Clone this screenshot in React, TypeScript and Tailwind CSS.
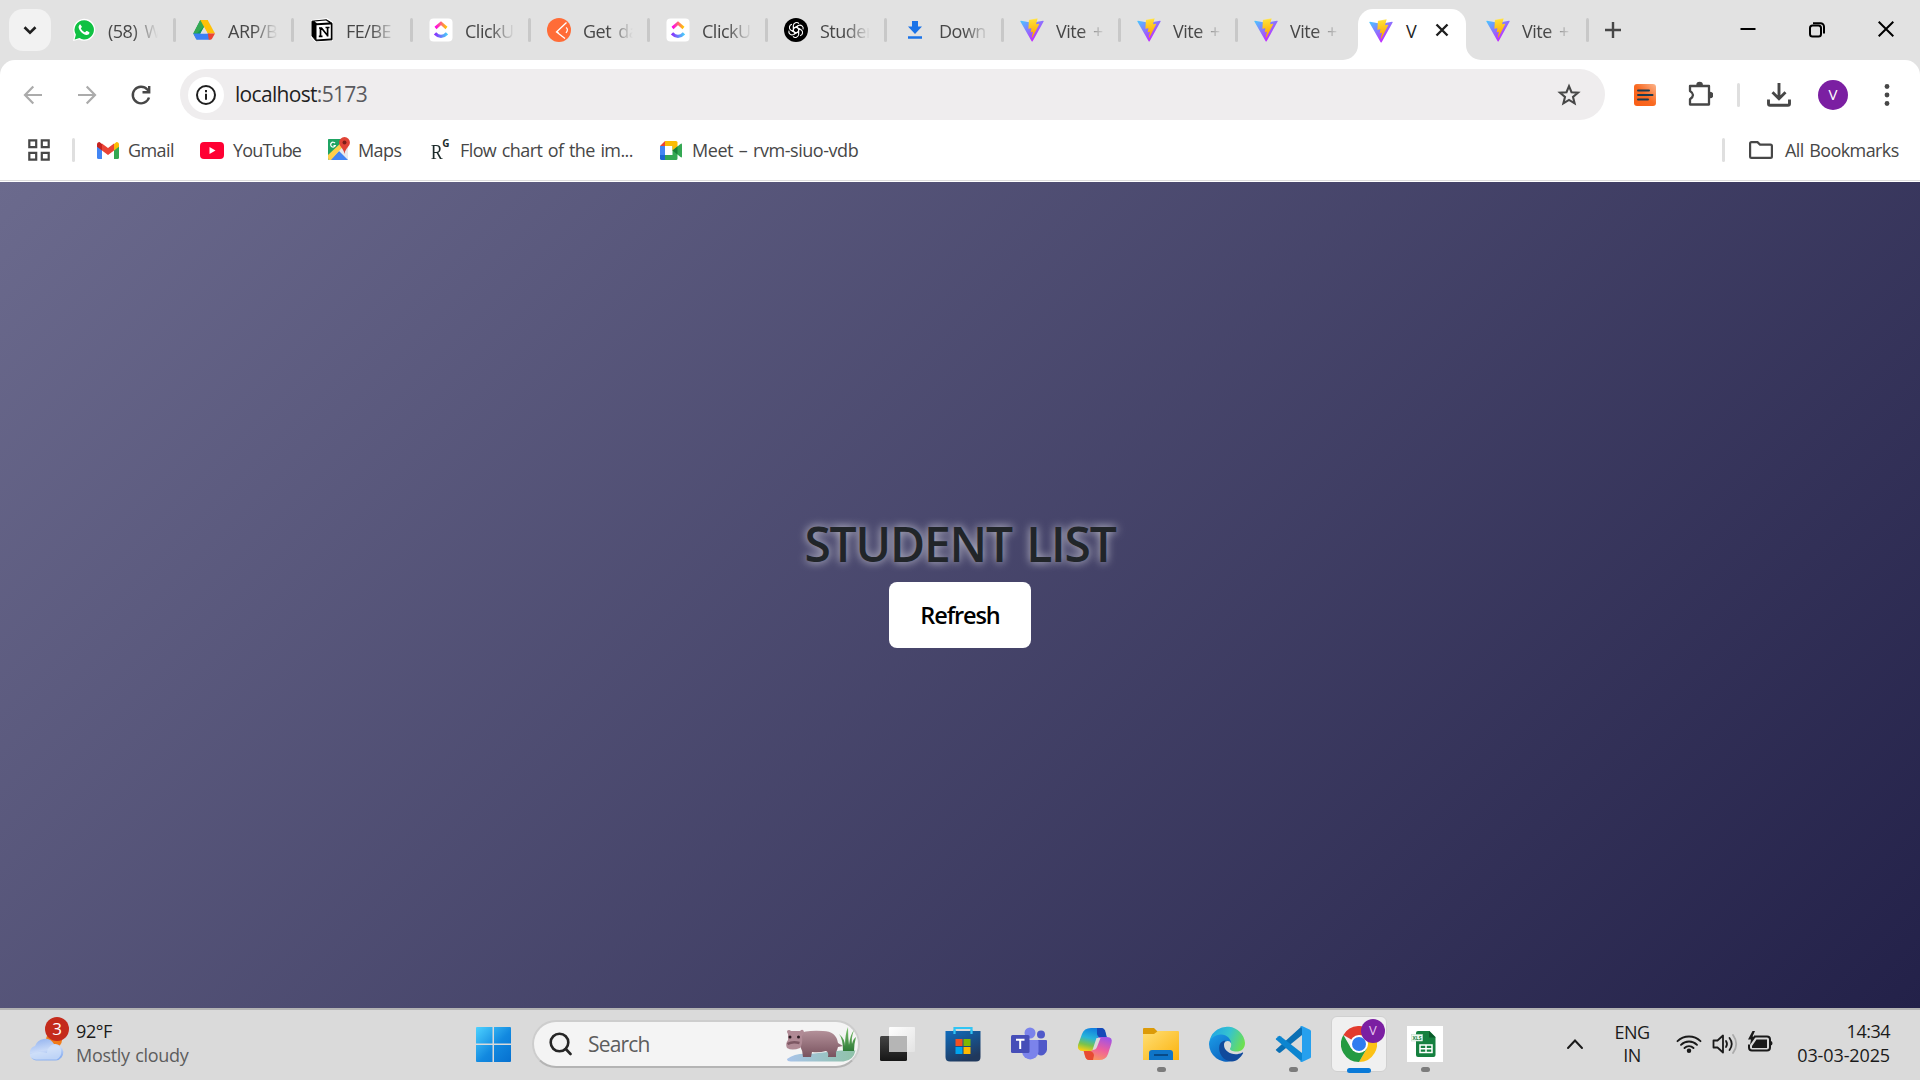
import React from 'react';

type KP = { children: React.ReactNode };

function Vite({ id }: { id: string }) {
  return (
    <svg className="h-6 w-6 shrink-0" viewBox="0 0 32 32" fill="none">
      <defs>
        <linearGradient id={id + 'a'} x1="0" y1="2" x2="18" y2="28" gradientUnits="userSpaceOnUse">
          <stop stopColor="#41d1ff" />
          <stop offset="1" stopColor="#bd34fe" />
        </linearGradient>
        <linearGradient id={id + 'b'} x1="15" y1="1" x2="18" y2="23" gradientUnits="userSpaceOnUse">
          <stop stopColor="#ffea83" />
          <stop offset="0.1" stopColor="#ffdd35" />
          <stop offset="1" stopColor="#ffa800" />
        </linearGradient>
      </defs>
      <path d="M31.5 4.8 16.9 31a.8.8 0 0 1-1.4 0L.5 4.8a.8.8 0 0 1 .8-1.2L16 6.2h.3l14.4-2.6a.8.8 0 0 1 .8 1.2Z" fill={`url(#${id}a)`} />
      <path d="M23 .2 12.200 2.300a.4.4 0 0 0-.3.4l-.7 11.200c0 .3.2.5.5.4l3-.7c.3 0 .5.2.5.5l-.9 4.400c-.1.3.2.5.5.4l1.900-.6c.3-.1.6.2.5.5l-1.400 6.900c-.1.4.5.7.7.3l.2-.2 8.900-17.600c.1-.3-.1-.6-.5-.5l-3.100.6c-.3 0-.5-.2-.5-.5l2-7c.1-.3-.1-.6-.500-.3Z" fill={`url(#${id}b)`} />
    </svg>
  );
}

function WhatsApp() {
  return (
    <svg className="h-6 w-6" viewBox="0 0 24 24">
      <path d="M1 23l1.500-6A11 11 0 1 1 7 21.500Z" fill="#fff" />
      <path d="M12.200 2.200a9.600 9.600 0 0 0-8.300 14.500L2.600 21.400l4.900-1.300a9.600 9.600 0 1 0 4.700-17.900Z" fill="#10c143" />
      <path d="M8.700 7c-.3-.6-.9-.6-1.300-.1-1.400 1.500-.8 3.600.5 5.500 1.700 2.500 4 4.200 6.300 4.500 1.700.2 3-.8 3.200-2 .1-.6 0-.7-.5-1l-1.800-.9c-.4-.2-.7-.1-1 .3l-.7.8c-.2.3-.4.3-.8.100-1.700-.800-2.800-1.900-3.600-3.400-.2-.3-.1-.5.100-.8l.600-.7c.2-.300.2-.5.100-.8Z" fill="#fff" />
    </svg>
  );
}

function Drive() {
  return (
    <svg className="h-6 w-6" viewBox="0 0 24 24">
      <path d="M8.300 2h7.400L12 9.500 5 21.800 1.300 15.500Z" fill="#0f9d58" />
      <path d="M8.300 2 12 8.500 4.800 15.500H1.300Z" fill="#34a853" />
      <path d="M8.300 2h7.400l7.300 13.500h-7.400Z" fill="#ffc107" />
      <path d="M1.300 15.500h16.200v6.300H5.300a1.500 1.500 0 0 1-1.300-.8Z" fill="#3b7ff5" />
      <path d="M15.800 15.500H23L20 20.800a2 2 0 0 1-1.700 1h-1.500Z" fill="#ea4335" />
      <path d="M12 9.300 8.500 15.500h7.100Z" fill="#e2e2e2" />
    </svg>
  );
}

function Notion() {
  return (
    <svg className="h-6 w-6" viewBox="0 0 24 24">
      <path d="M2 3 17 1l5 3.500V22L6 23l-4-4Z" fill="#fff" stroke="#fff" strokeWidth="2" strokeLinejoin="round" />
      <path d="M2 3.200 16.500 1.800 22 5.200v16.600L6 22.800 2 18Z" fill="#000" stroke="#000" strokeLinejoin="round" />
      <path d="M4.500 3.500 16 2.600l3 1.900L7 5.300Z" fill="#fff" />
      <path d="M6.500 7.300 20.800 6.400v14.200L6.500 21.500Z" fill="#fff" />
      <path d="M9 10h2.500l6 7.500M10.500 10v8M8.800 18.300h3.700M15.500 9.500h4M17.600 9.500v9" fill="none" stroke="#000" strokeWidth="1.700" />
    </svg>
  );
}

function ClickUp({ id }: { id: string }) {
  return (
    <svg className="h-6 w-6" viewBox="0 0 24 24">
      <defs>
        <linearGradient id={id + 'a'}><stop stopColor="#ff02f0" /><stop offset="1" stopColor="#ffc800" /></linearGradient>
        <linearGradient id={id + 'b'}><stop stopColor="#8930fd" /><stop offset="1" stopColor="#49ccf9" /></linearGradient>
      </defs>
      <rect x=".5" y=".5" width="23" height="23" rx="4" fill="#fff" />
      <path d="m6.500 10 5.500-4.800 5.500 4.800" fill="none" stroke={`url(#${id}a)`} strokeWidth="3" />
      <path d="M6 15.300q6 6.200 12 0" fill="none" stroke={`url(#${id}b)`} strokeWidth="3.200" />
    </svg>
  );
}

function Postman() {
  return (
    <svg className="h-6 w-6" viewBox="0 0 24 24">
      <circle cx="12" cy="12" r="12" fill="#ff6c37" />
      <path d="M19.500 4.500 9.500 14l8.500 6.500M10 13.800l1.600 1.300" fill="none" stroke="#fff" strokeWidth="1.300" />
      <path d="M19 9.500q2.800 1.500 0 5.500" fill="none" stroke="#fff" strokeWidth="1.200" />
    </svg>
  );
}

function OpenAI() {
  return (
    <svg className="h-6 w-6" viewBox="0 0 24 24">
      <circle cx="12" cy="12" r="12" fill="#000" />
      <g fill="none" stroke="#fff" strokeWidth="1.100">
        {[0, 60, 120, 180, 240, 300].map((a) => (
          <path key={a} transform={`rotate(${a} 12 12)`} d="M9.300 13.400V7.700a3.300 3.300 0 0 1 5.700-2.100M9.400 10.600 14 8" />
        ))}
      </g>
    </svg>
  );
}

function DownloadTab() {
  return (
    <svg className="h-6 w-6" viewBox="0 0 24 24" fill="#1a73e8">
      <path d="M9 3h6v5.500h4L12 16 5 8.500h4ZM5 18.300h14v2.400H5Z" />
    </svg>
  );
}

function TabLabel({ children }: KP) {
  return (
    <div className="ml-3 w-[50px] whitespace-nowrap pt-px text-[18px] leading-6 tracking-[-0.5px] text-[#474747] [mask-image:linear-gradient(90deg,#000_50%,transparent_100%)] [word-spacing:3px]">
      {children}
    </div>
  );
}

function Tab({ icon, label, w }: { icon: React.ReactNode; label: string; w: string }) {
  return (
    <div className={'flex h-6 shrink-0 items-center ' + w}>
      <div className="ml-4 h-6 w-6 shrink-0">{icon}</div>
      <TabLabel>{label}</TabLabel>
      <div className="ml-auto h-6 w-[3px] rounded-sm bg-[#c8c8c8]" />
    </div>
  );
}

function TabStrip() {
  return (
    <div className="flex h-[60px] items-center bg-[#e2e2e2]">
      <div className="ml-[9px] flex h-[42px] w-[42px] shrink-0 items-center justify-center rounded-[14px] bg-[#f2f2f2]">
        <svg className="h-5 w-5" viewBox="0 0 20 20" fill="none" stroke="#1f1f1f" strokeWidth="2.600"><path d="m4.500 7.300 5.500 5.400 5.500-5.400" /></svg>
      </div>
      <div className="ml-[5px] flex items-center">
        <Tab w="w-[120px]" icon={<WhatsApp />} label="(58) W" />
        <Tab w="w-[118px]" icon={<Drive />} label="ARP/B" />
        <Tab w="w-[119px]" icon={<Notion />} label="FE/BE" />
        <Tab w="w-[118px]" icon={<ClickUp id="c1" />} label="ClickU" />
        <Tab w="w-[119px]" icon={<Postman />} label="Get da" />
        <Tab w="w-[118px]" icon={<ClickUp id="c2" />} label="ClickU" />
        <Tab w="w-[119px]" icon={<OpenAI />} label="Studer" />
        <Tab w="w-[117px]" icon={<DownloadTab />} label="Down" />
        <Tab w="w-[117px]" icon={<Vite id="v1" />} label="Vite +" />
        <Tab w="w-[117px]" icon={<Vite id="v2" />} label="Vite +" />
      </div>
      <div className="flex h-6 w-[105px] shrink-0 items-center">
        <div className="ml-4 h-6 w-6"><Vite id="v3" /></div>
        <TabLabel>Vite +</TabLabel>
      </div>
      <div className="flex h-[60px] w-[138px] shrink-0 items-end">
        <svg className="h-[15px] w-[15px]" viewBox="0 0 15 15"><path d="M15 0v15H0A15 15 0 0 0 15 0" fill="#fff" /></svg>
        <div className="flex h-[51px] w-[108px] items-center rounded-t-[15px] bg-white">
          <div className="ml-[11px] h-6 w-6 -translate-y-[4px]"><Vite id="v4" /></div>
          <div className="ml-[13px] w-[12px] -translate-y-[4px] text-[18px] leading-6 text-[#1f1f1f]">V</div>
          <svg className="ml-[17px] h-[14px] w-[14px] -translate-y-[5px]" viewBox="0 0 14 14" stroke="#1f1f1f" strokeWidth="2.400"><path d="m1.500 1.500 11 11m0-11-11 11" /></svg>
        </div>
        <svg className="h-[15px] w-[15px]" viewBox="0 0 15 15"><path d="M0 0v15h15A15 15 0 0 1 0 0" fill="#fff" /></svg>
      </div>
      <div className="-ml-[11px]"><Tab w="w-[119px]" icon={<Vite id="v5" />} label="Vite +" /></div>
      <svg className="ml-4 h-4 w-4" viewBox="0 0 16 16" stroke="#474747" strokeWidth="2.400"><path d="M8 0v16M0 8h16" /></svg>
      <svg className="ml-auto h-4 w-4 -translate-y-px" viewBox="0 0 16 16" stroke="#000" strokeWidth="2"><path d="M.500 8h15" /></svg>
      <svg className="ml-[52px] h-[18px] w-[18px]" viewBox="0 0 18 18" fill="none" stroke="#000" strokeWidth="2"><rect x="2" y="4.500" width="11" height="11" rx="2.500" /><path d="M5 2.200h7.500a3.500 3.500 0 0 1 3.500 3.500V12.500" /></svg>
      <svg className="ml-[52px] mr-[26px] h-4 w-4 -translate-y-px" viewBox="0 0 16 16" stroke="#000" strokeWidth="2"><path d="m.700.700 14.600 14.600m0-14.600L.700 15.300" /></svg>
    </div>
  );
}

function Toolbar() {
  return (
    <div className="flex h-[69px] items-center rounded-t-[15px] bg-white">
      <svg className="ml-[21px] h-6 w-6" viewBox="0 0 24 24" fill="none" stroke="#ababab" strokeWidth="2.200"><path d="M21 12H4.500M12.300 3.500 4 12l8.300 8.500" /></svg>
      <svg className="ml-[30px] h-6 w-6" viewBox="0 0 24 24" fill="none" stroke="#ababab" strokeWidth="2.200"><path d="M3 12h16.500M11.700 3.500 20 12l-8.300 8.500" /></svg>
      <svg className="ml-[30px] h-6 w-6" viewBox="0 0 24 24" fill="none" stroke="#474747" strokeWidth="2.400"><path d="M20 14.500A8.300 8.300 0 1 1 18.300 6.500L20 8.500M20.200 3v6.200H13.500" /></svg>
      <div className="ml-[27px] flex h-[51px] w-[1425px] items-center rounded-full bg-[#efedee]">
        <div className="ml-2 flex h-9 w-9 items-center justify-center rounded-full bg-white">
          <svg className="h-5 w-5" viewBox="0 0 20 20" fill="none" stroke="#1f1f1f" strokeWidth="2"><circle cx="10" cy="10" r="9" /><path d="M10 8.800v6M10 5v2.200" /></svg>
        </div>
        <div className="ml-[11px] -translate-y-px whitespace-nowrap text-[21px] leading-7 tracking-[-0.680px] text-[#1f1f1f]">localhost<span className="text-[#5a5a5e]">:5173</span></div>
        <svg className="ml-auto mr-6 h-6 w-6" viewBox="0 0 24 24" fill="none" stroke="#474747" strokeWidth="2.100"><path d="m12 3.200 2.500 6 6.500.5-5 4.200 1.600 6.400L12 16.900l-5.600 3.400L8 13.900 3 9.700l6.500-.5Z" /></svg>
      </div>
      <svg className="ml-[29px] h-[22px] w-[22px]" viewBox="0 0 22 22">
        <defs><linearGradient id="ext" x1="1" y1="0" x2="0" y2="1"><stop stopColor="#fbb58d" /><stop offset=".5" stopColor="#f96a22" /><stop offset="1" stopColor="#fa5d14" /></linearGradient></defs>
        <rect width="22" height="22" rx="3" fill="url(#ext)" /><path d="M4 6.500h11M4 11h14.500M4 15.500h10" stroke="#1d3b50" strokeWidth="2" strokeLinecap="round" />
      </svg>
      <svg className="ml-8 h-[26px] w-[25px] -translate-y-px" viewBox="0 0 25 26" fill="none" stroke="#474747" strokeWidth="2.300" strokeLinejoin="round"><path d="M2 5h19v18.500H2v-5.200q6-4.300 0-8.300Z" /><path d="M9 4a2.600 2.600 0 0 1 5.200 0ZM22 11.400a2.600 2.600 0 0 1 0 5.200Z" fill="#474747" strokeWidth="1.400" /></svg>
      <div className="ml-6 h-6 w-[3px] rounded-sm bg-[#dfdfdf]" />
      <svg className="ml-[27px] h-6 w-6" viewBox="0 0 24 24" fill="none" stroke="#474747" strokeWidth="2.900"><path d="M12 0v15M5.500 9.200l6.500 6.500 6.500-6.500M1.500 16.500v4.300a1.500 1.500 0 0 0 1.500 1.500h18a1.500 1.500 0 0 0 1.500-1.500v-4.300" /></svg>
      <div className="ml-[27px] flex h-[30px] w-[30px] items-center justify-center rounded-full bg-[#7b1fa2] text-[15px] text-white">V</div>
      <svg className="ml-9 h-6 w-[6px]" viewBox="0 0 6 24" fill="#474747"><circle cx="3" cy="3.500" r="2.400" /><circle cx="3" cy="12" r="2.400" /><circle cx="3" cy="20.500" r="2.400" /></svg>
    </div>
  );
}

function BM({ children, w, ml }: KP & { w: string; ml: string }) {
  return <div className={'shrink-0 whitespace-nowrap text-[18px] leading-6 text-[#474747] ' + w + ' ' + ml}>{children}</div>;
}

function Bookmarks() {
  return (
    <div className="flex h-[52px] items-center border-b border-[#dcdcdc] bg-white pb-[9px]">
      <svg className="ml-7 h-[22px] w-[22px] shrink-0" viewBox="0 0 22 22" fill="none" stroke="#474747" strokeWidth="2.200"><path d="M1.300 1.300h6.900v6.900H1.300ZM13.800 1.300h6.900v6.900h-6.900ZM1.300 13.800h6.900v6.900H1.300ZM13.800 13.800h6.900v6.900h-6.900Z" /></svg>
      <div className="ml-[22px] h-6 w-[3px] shrink-0 rounded-sm bg-[#dfdfdf]" />
      <svg className="ml-[22px] h-[17px] w-[22px] shrink-0" viewBox="0 0 22 17">
        <path d="M0 3v12.500Q0 17 1.500 17H5V6Z" fill="#4285f4" /><path d="M22 3v12.500Q22 17 20.500 17H17V6Z" fill="#34a853" />
        <path d="M17 2v6.500L22 4.700V2.500Q22 0 19.500 0Z" fill="#fbbc04" /><path d="M5 2v6.500L0 4.700V2.500Q0 0 2.500 0Z" fill="#c5221f" /><path d="M5 8.500V1.500l6 4.600 6-4.600v7L11 13Z" fill="#ea4335" />
      </svg>
      <BM ml="ml-[9px]" w="w-[47px] tracking-[-0.6px]">Gmail</BM>
      <svg className="ml-[25px] h-[17px] w-6 shrink-0" viewBox="0 0 24 17"><rect width="24" height="17" rx="4" fill="#ff0033" /><path d="m9.500 5 6 3.500-6 3.500Z" fill="#fff" /></svg>
      <BM ml="ml-[9px]" w="w-[70px] tracking-[-0.85px]">YouTube</BM>
      <svg className="ml-[25px] h-6 w-[22px] shrink-0 -translate-y-px" viewBox="0 0 22 24">
        <rect y="2" width="20" height="21" rx="1.500" fill="#1fa463" /><path d="M1 22 18 4l2 4v15H2Z" fill="#e8eaed" /><path d="m2 23 9-9 9 9Z" fill="#4285f4" /><path d="m0 18 16-15 3 2L3 23H1.500Q0 23 0 21Z" fill="#ffd04b" /><path d="M0 17 13 4V2H1Q0 2 0 3Z" fill="#1fa463" />
        <path d="M7 6.200a2.400 2.400 0 1 0 .3 2.300H5.500" fill="none" stroke="#fff" strokeWidth="1.200" /><path d="M16.500 0a5.400 5.400 0 0 0-5.400 5.600c0 4 4.400 5.400 5.400 11.400 1-6 5.400-7.400 5.400-11.400A5.400 5.400 0 0 0 16.500 0" fill="#e04436" /><circle cx="16.500" cy="5.500" r="2" fill="#7c1f18" />
      </svg>
      <BM ml="ml-[8px]" w="w-[47px] tracking-[-0.6px]">Maps</BM>
      <div className="ml-[25px] flex w-[20px] shrink-0 font-['Liberation_Serif'] text-[20px] leading-6 text-[#1c2b2b]"><span className="mt-1 scale-x-90">R</span><span className="-ml-[1px] -mt-[3px] font-['Open_Sans'] text-[10px] font-bold leading-5">G</span></div>
      <BM ml="ml-[10px]" w="w-[173px] tracking-[-0.6px] [word-spacing:1.5px]">Flow chart of the im...</BM>
      <svg className="ml-[27px] h-[19px] w-[22px] shrink-0" viewBox="0 0 22 19">
        <path d="M5 0h11q1.500 0 1.500 1.500V5H5Z" fill="#fbbc04" /><path d="M5 0v5H0Z" fill="#ea4335" /><path d="M0 5h5v9H0Z" fill="#4285f4" /><path d="M0 14h5v5H1.500Q0 19 0 17.500Z" fill="#1967d2" /><path d="M5 14h7.500V5h5v12.500Q17.500 19 16 19H5Z" fill="#34a853" /><path d="M17.500 5v4.500h-5V5Z" fill="#fbbc04" /><path d="m12.500 9.500 8-6.600q1.500-1 1.500.5v12.200q0 1.500-1.500.5Z" fill="#34a853" /><path d="m12.500 9.500 5-4v8Z" fill="#188038" />
      </svg>
      <BM ml="ml-[10px]" w="w-[170px] tracking-[-0.45px] [word-spacing:1.5px]">Meet – rvm-siuo-vdb</BM>
      <div className="ml-auto h-6 w-[3px] rounded-sm bg-[#dfdfdf]" />
      <svg className="ml-6 h-[18px] w-6" viewBox="0 0 24 18" fill="none" stroke="#474747" strokeWidth="2.200"><path d="M1.100 15V2.500q0-1.400 1.400-1.400h6L11 3.600h10.500q1.400 0 1.400 1.400v10.500q0 1.400-1.400 1.400h-19q-1.400 0-1.400-1.400Z" /></svg>
      <BM ml="ml-3" w="w-[135px] tracking-[-0.6px] [word-spacing:1.5px]">All Bookmarks</BM>
    </div>
  );
}

function Cloud() {
  return (
    <div className="relative ml-[28px] mt-[-1px] h-11 w-9 shrink-0">
      <svg className="absolute bottom-[5px] left-0 h-7 w-9" viewBox="0 0 36 28">
        <defs><linearGradient id="cl" x1="0" y1="0" x2=".3" y2="1"><stop stopColor="#8fb0ee" /><stop offset=".6" stopColor="#c9daf8" /><stop offset="1" stopColor="#8db1f0" /></linearGradient></defs>
        <circle cx="26" cy="7" r="8" fill="#f07c1b" />
        <path d="M8 27.500a7.500 7.500 0 0 1-1-14.500A10.500 10.500 0 0 1 26 11a8.300 8.300 0 0 1 2 16.500Z" fill="url(#cl)" />
        <path d="M19 20a9 9 0 0 1 8-9 8.300 8.300 0 0 1 1.500 15.500H8q-6-1-6.500-5 8-4 17.500-1.500Z" fill="#d3e2fa" opacity=".7" />
      </svg>
      <div className="absolute -top-[5px] left-[17px] flex h-6 w-6 items-center justify-center rounded-full bg-[#c42b1c] text-[17px] leading-6 text-white">3</div>
    </div>
  );
}

function Hippo() {
  return (
    <svg className="mr-[1px] h-9 w-[72px]" viewBox="0 0 72 36">
      <defs>
        <linearGradient id="hb" x1="0" y1="0" x2="0" y2="1"><stop stopColor="#b39099" /><stop offset="1" stopColor="#79535f" /></linearGradient>
        <linearGradient id="wt"><stop stopColor="#a9c4ea" /><stop offset="1" stopColor="#8fc2a8" /></linearGradient>
        <linearGradient id="gr" x1="0" y1="0" x2="0" y2="1"><stop stopColor="#7cc46c" /><stop offset="1" stopColor="#2f7a38" /></linearGradient>
      </defs>
      <path d="M2 33q8-6 22-5l32-3.500h14.500q-2 10-12 11H6Q2 35.500 2 33Z" fill="url(#wt)" />
      <path d="M58 25q0-12-4-17 6 5 6 12 0-12 3-19 0 10 1 18 1-10 5-15-3 8-2 14 1-5 4-7-2 7-2 14Z" fill="url(#gr)" />
      <path d="M14 8Q20 4 38 5q13 0 15 12l5 3-5 1q-1 4-2 5v5h-8q1-5-2-6-7 2-14 1l-1 5h-8q0-6-3-11Z" fill="url(#hb)" />
      <path d="M2 5q2-2 4 0h9q3-3 4 1-1 3-2 4 1 8-2 12-8 3-13 0-2-4 1-8 0-4 0-6-1-1-1-3Z" fill="#b08a95" />
      <circle cx="5" cy="11" r="1.500" fill="#2b1b22" /><circle cx="13.500" cy="11" r="1.500" fill="#2b1b22" />
      <path d="M2.500 18q5-3 12-1" stroke="#7d5763" strokeWidth="2.500" fill="none" />
    </svg>
  );
}

function TaskApp({ children, dot }: KP & { dot?: boolean }) {
  return (
    <div className="relative flex h-full w-[66px] shrink-0 items-center justify-center">
      {children}
      {dot && <div className="absolute bottom-[6px] left-[29px] h-[5px] w-[9px] rounded-full bg-[#7c7c7c]" />}
    </div>
  );
}

function Taskbar() {
  return (
    <div className="flex h-[72px] items-center border-t-2 border-[#b3b3b3] bg-[#dadada] pb-[2px] text-[#1a1a1a]">
      <Cloud />
      <div className="ml-[12px] w-[130px] -translate-y-px whitespace-nowrap text-[18px] leading-6">
        <div className="tracking-[-0.4px]">92°F</div>
        <div className="tracking-[-0.3px] text-[#5d5d5d] [word-spacing:1px]">Mostly cloudy</div>
      </div>
      <svg className="ml-[270px] h-[35px] w-[35px] shrink-0" viewBox="0 0 35 35">
        <defs><linearGradient id="win" gradientUnits="userSpaceOnUse" x1="0" y1="0" x2="35" y2="35"><stop stopColor="#4dd2ff" /><stop offset=".55" stopColor="#1289e0" /><stop offset="1" stopColor="#0670cf" /></linearGradient></defs>
        <path d="M1 0h15.500v16.500H0V1Q0 0 1 0ZM18 0h16q1 0 1 1v15.500H18ZM0 18h16.500v17H1q-1 0-1-1ZM18 18h17v16q0 1-1 1H18Z" fill="url(#win)" />
      </svg>
      <div className="ml-[21px] flex h-[48px] w-[328px] shrink-0 items-center rounded-full border-2 border-[#cdcdcd] border-b-[#b4b4b4] bg-[#f4f4f4]">
        <svg className="ml-[14px] h-6 w-6 shrink-0" viewBox="0 0 24 24" fill="none" stroke="#262626" strokeWidth="2.600" strokeLinecap="round"><circle cx="11.500" cy="10.500" r="8.800" /><path d="m17.800 17 4.700 5" /></svg>
        <div className="ml-4 flex-1 text-[21px] leading-7 tracking-[-0.8px] text-[#5d5d5d]">Search</div>
        <Hippo />
      </div>
      <div className="ml-1 flex h-full items-center">
        <TaskApp>
          <svg className="h-9 w-9" viewBox="0 0 36 36">
            <defs><linearGradient id="tv" x1="0" y1="0" x2="0" y2="1"><stop stopColor="#444" /><stop offset="1" stopColor="#161616" /></linearGradient><linearGradient id="tw" x1="0" y1="0" x2="1" y2="1"><stop stopColor="#fff" /><stop offset="1" stopColor="#e3e3e3" /></linearGradient></defs>
            <rect x="1" y="10" width="27" height="25" rx="1.500" fill="url(#tv)" /><rect x="10" y="1" width="26" height="25" rx="1" fill="url(#tw)" /><path d="M10 10h18v16H10Z" fill="#b5b5b5" />
          </svg>
        </TaskApp>
        <TaskApp>
          <svg className="h-9 w-9" viewBox="0 0 36 36">
            <defs><linearGradient id="st" x1="0" y1="0" x2=".5" y2="1"><stop stopColor="#0f6cbd" /><stop offset="1" stopColor="#20385c" /></linearGradient></defs>
            <path d="M9.500 8V2h17v6" fill="none" stroke="#31c5f4" strokeWidth="2.200" /><path d="M.5 5h35v26q0 4.500-4.500 4.500H5Q.5 35.500.5 31Z" fill="url(#st)" /><path d="M9.500 8V4M26.500 8V4" stroke="#31c5f4" strokeWidth="2.200" />
            <path d="M10.500 13h7v7h-7Z" fill="#f25022" /><path d="M18.500 13h7v7h-7Z" fill="#7fba00" /><path d="M10.500 21h7v7h-7Z" fill="#00a4ef" /><path d="M18.500 21h7v7h-7Z" fill="#ffb900" />
          </svg>
        </TaskApp>
        <TaskApp>
          <svg className="h-9 w-9" viewBox="0 0 36 36">
            <circle cx="30" cy="8.500" r="4" fill="#5059c9" /><path d="M24 14h11q1 0 1 1v8a6 6 0 0 1-9 5.500Z" fill="#5059c9" /><circle cx="19" cy="7" r="5.500" fill="#7b83eb" /><path d="M11 14h15.500q1 0 1 1v11a8.300 8.300 0 0 1-16.500 0Z" fill="#7b83eb" />
            <rect x="0" y="9" width="18.500" height="18" rx="1.500" fill="#464eb8" /><path d="M5 13.700h8.500M9.200 13.700V23" stroke="#fff" strokeWidth="2" />
          </svg>
        </TaskApp>
        <TaskApp>
          <svg className="h-9 w-9" viewBox="0 0 36 36">
            <defs>
              <linearGradient id="ca" x1=".6" y1="0" x2=".3" y2="1"><stop stopColor="#0f7ce0" /><stop offset=".45" stopColor="#28b5d8" /><stop offset=".75" stopColor="#7bc34b" /><stop offset="1" stopColor="#f5cf15" /></linearGradient>
              <linearGradient id="cb" x1=".7" y1="0" x2=".3" y2="1"><stop stopColor="#a153e6" /><stop offset=".5" stopColor="#ee5f9c" /><stop offset="1" stopColor="#fb9b5b" /></linearGradient>
            </defs>
            <path d="M14 2h10q3 0 4 4l1.500 5H23q-2 0-3 3l-2 7q-1 4-5 4H6q-6 0-5-6L5 8q2-6 9-6Z" fill="url(#ca)" /><path d="M20 2h4.500q3 0 4 4l1.500 6h-5q-4 0-5-4Z" fill="#1549b8" />
            <path d="M22 34H12q-3 0-4-4l-1.500-5H13q3 0 4-3l2.500-8q1-3 4-3H30q6 0 4.500 6L31 28q-2 6-9 6Z" fill="url(#cb)" /><path d="M16 34h-4q-3 0-4-4l-1.200-5H12q4 0 5 4Z" fill="#e74a32" />
            <path d="m15.500 24 4-12h4l-3.500 9q-1 3-4.500 3Z" fill="#dadada" />
          </svg>
        </TaskApp>
        <TaskApp dot>
          <svg className="h-9 w-9" viewBox="0 0 36 36">
            <defs><linearGradient id="fe" x1="0" y1="0" x2="1" y2="1"><stop stopColor="#ffdf75" /><stop offset="1" stopColor="#fbb20d" /></linearGradient></defs>
            <path d="M0 3q0-1 1-1h10l4 4-3 4H0Z" fill="#dc9a08" /><path d="M0 8h11l4-3h20q1 0 1 1v28H0Z" fill="url(#fe)" /><path d="M6 34v-7q0-3 3-3h18q3 0 3 3v7Z" fill="#0f75c8" /><path d="M11 29h14" stroke="#084a87" strokeWidth="2" />
          </svg>
        </TaskApp>
        <TaskApp>
          <svg className="h-9 w-9" viewBox="0 0 36 36">
            <defs>
              <linearGradient id="ea" x1="0" y1=".3" x2="1" y2=".6"><stop stopColor="#1fa4e4" /><stop offset=".5" stopColor="#35c3d0" /><stop offset="1" stopColor="#6fe04e" /></linearGradient>
              <linearGradient id="eb" x1="0" y1="0" x2=".6" y2="1"><stop stopColor="#1c9de8" /><stop offset="1" stopColor="#0c65c0" /></linearGradient>
            </defs>
            <path d="M1 13A18 18 0 0 1 36 17c0 6-4 8.500-8.500 8.500-4 0-6.500-1.500-6.500-2.500s1.200-1.500 1.200-4.500c0-4-4.500-8.500-10-8.500C6 10 1 14 0 18Z" fill="url(#ea)" />
            <path d="M0 18C0 13 6 8.500 12 8.500c6 0 10 4.500 10.200 9-2-5-9.200-2-9.200 4.500 0 6 5 13 10 13A18 18 0 0 1 0 18Z" fill="url(#eb)" />
            <path d="M10.500 19c-2 8 4 16.500 12.500 16.500 5 0 9-4.500 11-8 .4-.8-.3-1.200-1-.8-8 4-18-.7-18-7.700 0-2 .8-3.500 2-4.500-3 0-5.500 1.500-6.500 4.500Z" fill="#114a9c" />
          </svg>
        </TaskApp>
        <TaskApp dot>
          <svg className="h-9 w-9" viewBox="0 0 36 36">
            <path d="M1 23.500 27 0v9L5.500 26.500q-1 .8-2 0l-2.300-2q-.7-.5-.2-1Z" fill="#0a6fb4" /><path d="m1 12.500 2.500-2.300q1-.7 2 0L27 27v9L1 13.600q-.5-.5 0-1.100Z" fill="#0c85d0" /><path d="M27 0 35 3.700q1 .5 1 1.500v25.600q0 1-1 1.500L27 36q-1.500 0-2-1 2 .5 2-2V3q0-2.500-2-2 .500-1 2-1Z" fill="#26a0ee" />
          </svg>
        </TaskApp>
        <div className="relative mx-[5px] flex h-[56px] w-[56px] items-center justify-center rounded-[6px] border border-[#d0d0d0] bg-[#f0f0f0]">
          <svg className="h-9 w-9" viewBox="0 0 36 36">
            <path d="M18 18 2.400 9A18 18 0 0 1 33.600 9L27 14Z" fill="#e33b2e" /><path d="M18 9h15.600A18 18 0 0 1 18 36l7.800-13.500Z" fill="#fbc116" /><path d="M2.400 9A18 18 0 0 0 18 36l7.800-13.500-15.600 0Z" fill="#249a41" /><circle cx="18" cy="18" r="9" fill="#fff" /><circle cx="18" cy="18" r="7" fill="#2f7cf0" />
          </svg>
          <div className="absolute right-[1px] top-[2px] flex h-6 w-6 items-center justify-center rounded-full bg-[#7b1fa2] text-[13px] font-medium text-[#e6c4f0]">V</div>
          <div className="absolute -bottom-[2px] left-[15px] h-[5px] w-6 rounded-full bg-[#0a7ad8]" />
        </div>
        <TaskApp dot>
          <svg className="h-9 w-9" viewBox="0 0 36 36">
            <rect width="36" height="36" fill="#fff" /><path d="M11 5h11.500l6 6v18q0 2-2 2H11q-2 0-2-2V7q0-2 2-2Z" fill="#15803f" /><path d="m22 5 6.500 6.500H22Z" fill="#0a5a2a" /><path d="M13 19h12v7.500H13Zm0 3.700h12M19 19v7.500" fill="none" stroke="#fff" strokeWidth="1.500" />
            <rect x="4.500" y="8.500" width="11" height="6.500" fill="#f2fbf4" stroke="#c5dccb" strokeWidth=".6" /><text x="10" y="13.700" textAnchor="middle" fontSize="5" fontWeight="700" fontFamily="Open Sans" fill="#15803f">XLS</text>
          </svg>
        </TaskApp>
      </div>
      <svg className="ml-auto h-3 w-[18px] shrink-0" viewBox="0 0 18 12" fill="none" stroke="#1a1a1a" strokeWidth="2" strokeLinecap="round"><path d="m2 10 7-7.500 7 7.500" /></svg>
      <div className="ml-[26px] w-[44px] text-center text-[18px] leading-[23px] tracking-[-0.500px]"><div>ENG</div><div>IN</div></div>
      <svg className="ml-[22px] h-[19px] w-[26px] shrink-0 -translate-y-px" viewBox="0 0 26 19" fill="none" stroke="#1a1a1a" strokeWidth="1.900" strokeLinecap="round"><path d="M1.500 7.200a16.300 16.300 0 0 1 23 0M5 10.800a11.300 11.300 0 0 1 16 0M8.500 14a6.400 6.400 0 0 1 9 0" /><circle cx="13" cy="16.700" r="1.300" fill="#1a1a1a" /></svg>
      <svg className="ml-[10px] h-[22px] w-[26px] shrink-0" viewBox="0 0 26 22" fill="none" stroke="#1a1a1a" strokeWidth="1.800" strokeLinejoin="round" strokeLinecap="round"><path d="M1.500 7.500h4l5.500-5v17l-5.500-5h-4ZM14 8q2 3 0 6M17.500 5q4.500 6 0 12" /><path d="M21 2q6.500 9 0 18" stroke="#ababab" /></svg>
      <svg className="ml-[9px] h-[24px] w-[26px] shrink-0 -translate-y-[2px]" viewBox="0 0 26 24"><path d="M7 6.500h13q3 0 3 3v8q0 3-3 3H5q-3 0-3-3v-3" fill="none" stroke="#1a1a1a" strokeWidth="2" /><path d="M9.500 9.500H20v8.500H5v-2ZM23.500 11q2 0 2 2.300t-2 2.300Z" fill="#1a1a1a" /><path d="M5.500 1 1 9.500h3L3 15l6-8.500H5.500L8 1Z" fill="#1a1a1a" /></svg>
      <div className="mr-[30px] ml-[17px] w-[100px] -translate-y-px whitespace-nowrap text-right text-[18px] leading-6"><div className="tracking-[-0.5px]">14:34</div><div className="tracking-[-0.12px]">03-03-2025</div></div>
    </div>
  );
}

export default function App() {
  return (
    <div className="flex h-[1080px] w-[1920px] flex-col overflow-hidden bg-[#e2e2e2] font-['Open_Sans','Noto_Sans',sans-serif]">
      <TabStrip />
      <Toolbar />
      <Bookmarks />
      <main className="flex flex-1 flex-col items-center border-t border-white bg-[linear-gradient(135deg,#6b6a8d,#232149)]">
        <h1 className="mt-[333px] text-[48px] font-semibold leading-[58px] tracking-[-1.200px] text-[#212529] [text-shadow:0_0_10px_rgba(255,255,255,0.75)] [word-spacing:3px]">STUDENT LIST</h1>
        <button className="mt-[9px] h-[66px] w-[142px] rounded-[8px] bg-white pt-[2px] text-[23.500px] font-semibold tracking-[-1.100px] text-black">Refresh</button>
      </main>
      <Taskbar />
    </div>
  );
}
